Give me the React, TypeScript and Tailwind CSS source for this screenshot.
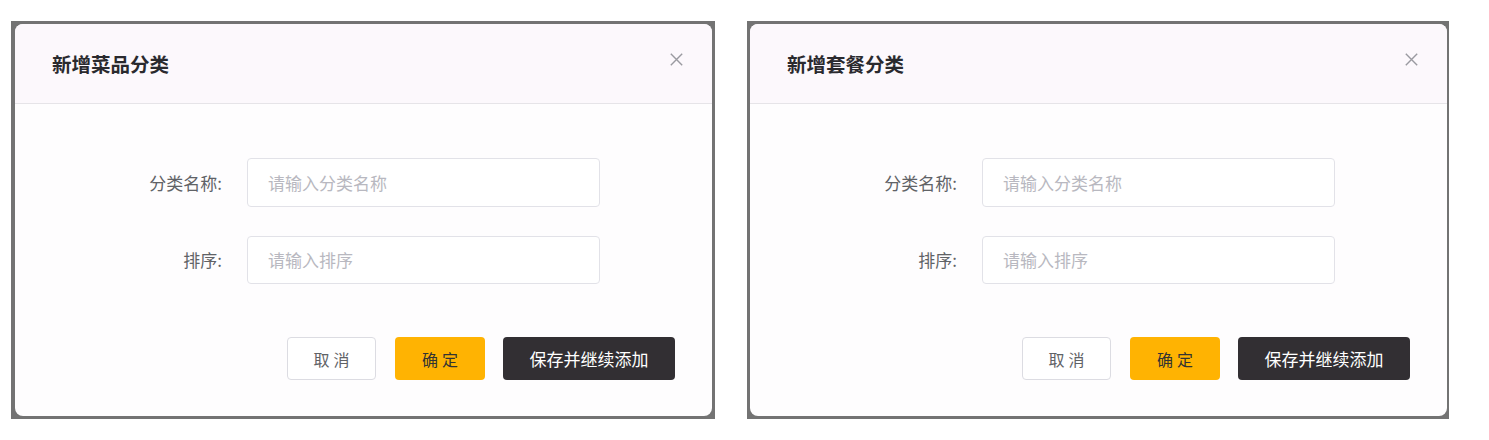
import React from "react";

function Dialog({ title }: { title: string }) {
  return (
    <div className="flex flex-col rounded-[8px] bg-[#fefdfe] w-full h-full overflow-hidden">
      <div className="flex items-start justify-between h-[80px] pl-[37px] pr-[29px] bg-[#fcf8fc] border-b border-[#e6e4e8]">
        <div className="mt-[28px] leading-[24px] text-[19.5px] font-bold text-[#2a2a2e]">{title}</div>
        <svg className="mt-[29px]" width="13" height="13" viewBox="0 0 13 13" fill="none" stroke="#9a9aa0" strokeWidth="1.4">
          <path d="M0.8 0.8 L12.2 12.2 M12.2 0.8 L0.8 12.2" />
        </svg>
      </div>
      <div className="flex flex-col pt-[54px]">
        <div className="flex items-center">
          <div className="w-[207px] text-right text-[17px] text-[#606266]">分类名称:</div>
          <div className="ml-[25px] w-[353px] h-[49px] rounded-[4px] border border-[#e2e2e8] bg-white flex items-center pl-[20px] text-[17px] text-[#b8b8c0]">
            请输入分类名称
          </div>
        </div>
        <div className="flex items-center mt-[29px]">
          <div className="w-[207px] text-right text-[17px] text-[#606266]">排序:</div>
          <div className="ml-[25px] w-[353px] h-[48px] rounded-[4px] border border-[#e2e2e8] bg-white flex items-center pl-[20px] text-[17px] text-[#b8b8c0]">
            请输入排序
          </div>
        </div>
        <div className="flex justify-end pr-[37px] mt-[53px]">
          <div className="w-[89px] h-[43px] rounded-[4px] border border-[#dcdce2] bg-white flex items-center justify-center text-[16px] tracking-[4px] text-[#606266] pl-[4px]">
            取消
          </div>
          <div className="ml-[19px] w-[90px] h-[43px] rounded-[4px] bg-[#ffb302] flex items-center justify-center text-[16px] tracking-[4px] text-[#333333] pl-[4px]">
            确定
          </div>
          <div className="ml-[18px] w-[172px] h-[43px] rounded-[4px] bg-[#322f33] flex items-center justify-center text-[17px] text-white">
            保存并继续添加
          </div>
        </div>
      </div>
    </div>
  );
}

export default function App() {
  return (
    <div
      className="w-[1489px] h-[440px] bg-white flex items-start pt-[21px] pl-[11px]"
      style={{ fontFamily: '"Noto Sans CJK SC", "Noto Sans", sans-serif' }}
    >
      <div className="w-[704px] h-[398px] bg-[#737373] pl-[4px] pt-[3px] pr-[3px] pb-[3px]">
        <Dialog title="新增菜品分类" />
      </div>
      <div className="ml-[32px] w-[702px] h-[398px] bg-[#737373] pl-[3px] pt-[3px] pr-[2px] pb-[3px]">
        <Dialog title="新增套餐分类" />
      </div>
    </div>
  );
}
